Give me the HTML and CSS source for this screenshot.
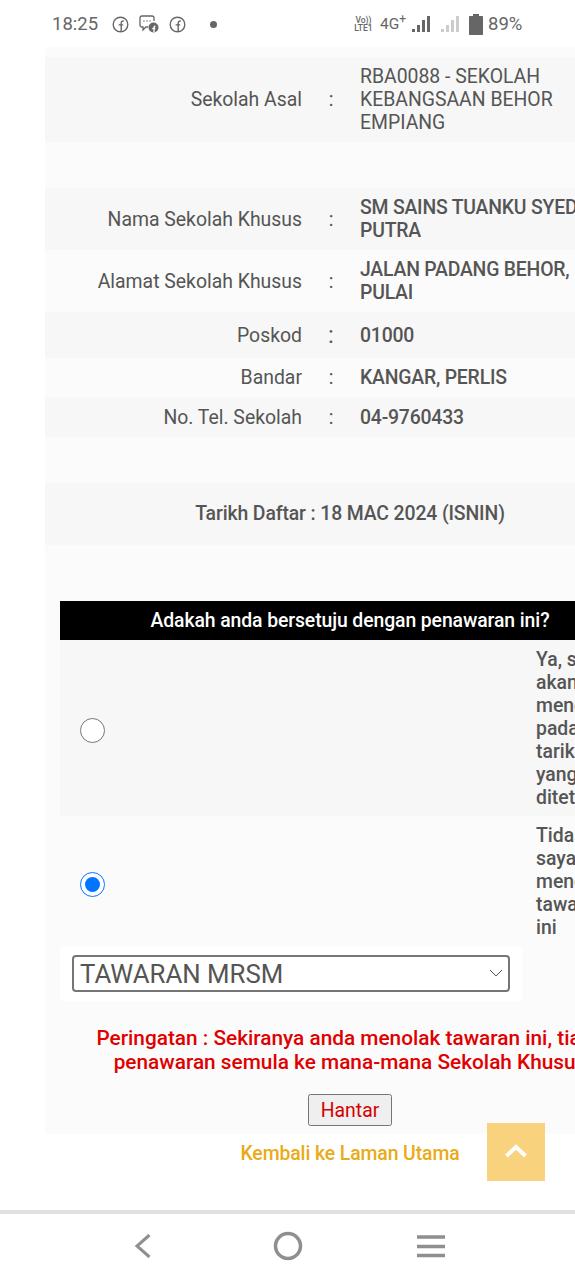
FILE: index.html
```html
<!DOCTYPE html>
<html lang="ms">
<head>
  <meta charset="UTF-8">
  <meta name="viewport" content="width=device-width, initial-scale=1.0">
  <title>Semakan Tawaran</title>
  <link rel="stylesheet" href="styles.css">
</head>
<body>
  <!-- Phone status bar -->
  <div class="status-bar">
    <span class="clock">18:25</span>
    <svg class="fb-icon first" viewBox="0 0 17 17"><circle cx="8.5" cy="8.5" r="7.3"/><path d="M9.2 15.5V7.2c0-1.6.7-2.3 2.6-2.1M6.6 8.9h4.6"/></svg>
    <svg class="chat-icon" viewBox="0 0 20 18"><path class="line" d="M3 1h10c1.2 0 2 .8 2 2v3M9 12H7l-3 3v-3H3c-1.200 0-2-.8-2-2V3c0-1.200.8-2 2-2"/><circle class="fill" cx="14.500" cy="12.500" r="5"/><path class="cut" d="M15 17v-4.500c0-1 .4-1.400 1.500-1.300M13.300 13.500h3"/><path class="dots" d="M4.500 6h1M7.500 6h1M10.500 6h1"/></svg>
    <svg class="fb-icon" viewBox="0 0 17 17"><circle cx="8.5" cy="8.5" r="7.3"/><path d="M9.2 15.5V7.2c0-1.6.7-2.3 2.6-2.1M6.6 8.9h4.6"/></svg>
    <span class="dot"></span>
    <span class="volte">Vo))<br>LTE1</span>
    <span class="net">4G<sup>+</sup></span>
    <svg class="signal" viewBox="0 0 20 18"><rect x="0" y="14" width="3" height="3"/><rect x="5" y="10" width="3" height="7"/><rect x="10" y="5" width="3" height="12"/><rect x="15" y="1" width="3" height="16"/></svg>
    <svg class="signal off" viewBox="0 0 20 18"><rect x="0" y="14" width="3" height="3"/><rect x="5" y="10" width="3" height="7"/><rect x="10" y="5" width="3" height="12"/><rect x="15" y="1" width="3" height="16"/></svg>
    <svg class="battery" viewBox="0 0 14 21"><path d="M4 0h6v2h3c.6 0 1 .4 1 1v17c0 .6-.4 1-1 1H1c-.6 0-1-.4-1-1V3c0-.6.4-1 1-1h3z"/></svg>
    <span class="percent">89%</span>
  </div>

  <div class="container">
    <div class="info-row">
      <div class="info-label">Sekolah Asal</div>
      <div class="info-colon">:</div>
      <div class="info-value plain">RBA0088 - SEKOLAH KEBANGSAAN BEHOR EMPIANG</div>
    </div>
    <div class="spacer"></div>
    <div class="info-row">
      <div class="info-label">Nama Sekolah Khusus</div>
      <div class="info-colon">:</div>
      <div class="info-value">SM SAINS TUANKU SYED PUTRA</div>
    </div>
    <div class="info-row">
      <div class="info-label">Alamat Sekolah Khusus</div>
      <div class="info-colon">:</div>
      <div class="info-value">JALAN PADANG BEHOR, PULAI</div>
    </div>
    <div class="info-row">
      <div class="info-label">Poskod</div>
      <div class="info-colon big">:</div>
      <div class="info-value">01000</div>
    </div>
    <div class="info-row">
      <div class="info-label">Bandar</div>
      <div class="info-colon">:</div>
      <div class="info-value">KANGAR, PERLIS</div>
    </div>
    <div class="info-row tel-row">
      <div class="info-label">No. Tel. Sekolah</div>
      <div class="info-colon">:</div>
      <div class="info-value">04-9760433</div>
    </div>
    <div class="spacer"></div>
    <div class="date-row">Tarikh Daftar : 18 MAC 2024 (ISNIN)</div>

    <table class="offer-table">
      <colgroup>
        <col class="col-left">
        <col class="col-right">
      </colgroup>
      <thead>
        <tr><th colspan="2">Adakah anda bersetuju dengan penawaran ini?</th></tr>
      </thead>
      <tbody>
        <tr>
          <td class="radio-cell"><input type="radio" name="setuju"></td>
          <td class="option-cell first-option">Ya, saya akan mendaftar pada tarikh yang ditetapkan</td>
        </tr>
        <tr>
          <td class="radio-cell"><input type="radio" name="setuju" checked></td>
          <td class="option-cell">Tidak, saya menolak tawaran ini</td>
        </tr>
        <tr>
          <td class="select-cell">
            <div class="select-wrap">
              <select class="reason">
                <option>TAWARAN MRSM</option>
              </select>
              <svg class="select-arrow" viewBox="0 0 14 8"><path d="M1 1l6 6 6-6"/></svg>
            </div>
          </td>
          <td class="empty-cell"></td>
        </tr>
      </tbody>
    </table>

    <p class="warning">Peringatan : Sekiranya anda menolak tawaran ini, tiada penawaran semula ke mana-mana Sekolah Khusus</p>
    <div class="submit-row"><button class="submit-btn">Hantar</button></div>
  </div>

  <div class="back-link"><a href="#">Kembali ke Laman Utama</a></div>

  <a class="to-top" href="#">
    <svg viewBox="0 0 24 14"><path d="M2.500 12 12 3l9.500 9"/></svg>
  </a>

  <!-- Android navigation bar -->
  <div class="nav-bar">
    <svg class="nav-back" viewBox="0 0 18 26"><path d="M15.500 2 3 13l12.500 11"/></svg>
    <svg class="nav-home" viewBox="0 0 30 30"><circle cx="15" cy="15" r="12.500"/></svg>
    <svg class="nav-menu" viewBox="0 0 30 24"><path d="M1 3h28M1 12.500h28M1 21.500h28"/></svg>
  </div>
</body>
</html>
```

FILE: styles.css
```css
html, body {
  margin: 0;
  padding: 0;
}
body {
  position: relative;
  width: 575px;
  height: 1280px;
  overflow: hidden;
  background: #fff;
  font-family: Roboto, "Liberation Sans", sans-serif;
  font-size: 19.4px;
  line-height: 23px;
  color: #555;
}

/* Status bar */
.status-bar {
  display: flex;
  align-items: center;
  height: 46px;
  padding-top: 1px;
  padding-left: 52px;
  color: #666;
}
.clock {
  font-size: 18.5px;
  width: 60px;
}
.fb-icon {
  width: 17px;
  height: 17px;
  fill: none;
  stroke: #666;
  stroke-width: 1.4;
}
.chat-icon {
  width: 20px;
  height: 18px;
  margin: 0 10px;
  fill: none;
}
.chat-icon .line {
  stroke: #666;
  stroke-width: 1.300;
}
.chat-icon .fill {
  fill: #666;
}
.chat-icon .cut {
  stroke: #fff;
  stroke-width: 1.300;
}
.chat-icon .dots {
  stroke: #666;
  stroke-width: 1.300;
}
.dot {
  width: 7px;
  height: 7px;
  margin-left: 24px;
  border-radius: 50%;
  background: #666;
}
.volte {
  width: 21px;
  margin-left: 136px;
  font-size: 8.5px;
  line-height: 8px;
  font-weight: 500;
  text-align: center;
}
.net {
  width: 28px;
  margin-left: 6px;
  font-size: 15.5px;
}
.net sup {
  font-size: 12px;
  line-height: 0;
}
.signal {
  width: 20px;
  height: 18px;
  margin-left: 4px;
  fill: #666;
}
.signal.off {
  margin-left: 9px;
  fill: #ccc;
}
.battery {
  width: 14px;
  height: 21px;
  margin-left: 8px;
  fill: #666;
}
.percent {
  margin-left: 5px;
  font-size: 18.5px;
}

/* Main panel, wider than the phone screen */
.container {
  width: 610px;
  height: 1087px;
  margin-left: 45px;
  padding-top: 10px;
  box-sizing: border-box;
  background: #fbfbfb;
}
.info-row {
  display: grid;
  grid-template-columns: 257px 58px 240px;
  align-items: center;
  padding: 8px 0;
}
.info-row:nth-child(1), .info-row:nth-child(3), .info-row:nth-child(5), .info-row:nth-child(7) {
  background: #f7f7f7;
}
.tel-row {
  padding-top: 9px;
}
.info-label {
  text-align: right;
}
.info-colon {
  text-align: center;
}
.info-colon.big {
  font-size: 24px;
  line-height: 30px;
}
.info-value {
  font-weight: 500;
  letter-spacing: -0.2px;
}
.info-value.plain {
  font-weight: normal;
  letter-spacing: 0;
}
.spacer {
  height: 46px;
}
.date-row {
  padding: 19px 0 20px;
  background: #f7f7f7;
  font-weight: 500;
  letter-spacing: -0.12px;
  text-align: center;
}

/* Offer table */
.offer-table {
  width: 580px;
  margin: 56px 0 0 15px;
  border-collapse: collapse;
  table-layout: fixed;
}
.col-left {
  width: 462px;
}
.offer-table th {
  height: 39px;
  padding: 0;
  background: #000;
  color: #fff;
  font-weight: 500;
  letter-spacing: -0.1px;
  text-align: center;
}
.offer-table td {
  padding: 8px 14px;
  font-weight: 500;
}
.offer-table tbody tr:nth-child(1) td {
  background: #f7f7f7;
}
.offer-table .first-option {
  padding-bottom: 7px;
}
.radio-cell input {
  display: block;
  width: 25px;
  height: 25px;
  margin: 5px 0 0 6px;
}
.offer-table .select-cell {
  height: 54px;
  padding: 8px 12px 9px;
  box-sizing: border-box;
  background: #fff;
}
.select-wrap {
  position: relative;
}
.reason {
  display: block;
  width: 100%;
  height: 37px;
  padding: 0 6px;
  appearance: none;
  border: 2px solid #767676;
  border-radius: 4px;
  font-family: Roboto, "Liberation Sans", sans-serif;
  font-size: 25.8px;
  color: #555;
  background: #fff;
}
.select-arrow {
  position: absolute;
  right: 7px;
  top: 14px;
  width: 14px;
  height: 8px;
  fill: none;
  stroke: #555;
  stroke-width: 1;
}
.warning {
  margin: 25px 30px 0;
  font-size: 20.8px;
  font-weight: 500;
  line-height: 24px;
  color: #e00000;
  text-align: center;
}
.submit-row {
  margin-top: 20px;
  text-align: center;
}
.submit-btn {
  width: 84px;
  height: 32px;
  padding: 0;
  font-family: Roboto, "Liberation Sans", sans-serif;
  font-size: 19.4px;
  color: #d40000;
}
.back-link {
  margin-top: 8px;
  width: 700px;
  letter-spacing: -0.1px;
  text-align: center;
}
.back-link a {
  font-weight: 500;
  color: #e9ab17;
  text-decoration: none;
}

/* Floating back-to-top button */
.to-top {
  position: absolute;
  left: 487px;
  top: 1123px;
  display: flex;
  align-items: center;
  justify-content: center;
  width: 58px;
  height: 58px;
  background: #f8d27c;
}
.to-top svg {
  width: 24px;
  height: 14px;
  margin-top: -2px;
  fill: none;
  stroke: #fff;
  stroke-width: 4;
}

/* Navigation bar */
.nav-bar {
  position: absolute;
  left: 0;
  right: 0;
  bottom: 0;
  height: 70px;
  padding: 0 0 2px 5px;
  border-top: 4px solid #e0e0e0;
  box-sizing: border-box;
  display: flex;
  align-items: center;
  justify-content: center;
}
.nav-bar svg {
  fill: none;
  stroke: #8f8f8f;
}
.nav-back {
  width: 18px;
  height: 26px;
  stroke-width: 3;
  margin-right: 121px;
}
.nav-home {
  width: 30px;
  height: 30px;
  stroke-width: 3.500;
  margin-right: 113px;
}
.nav-menu {
  width: 30px;
  height: 24px;
  stroke-width: 3.500;
}
```
